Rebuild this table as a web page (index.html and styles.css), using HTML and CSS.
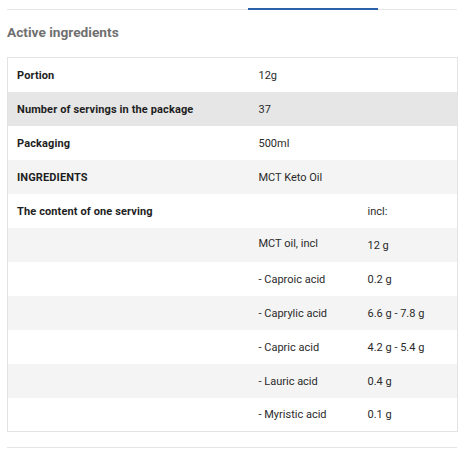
FILE: index.html
```html
<!DOCTYPE html>
<html>
<head>
<meta charset="utf-8">
<link rel="stylesheet" href="styles.css">
</head>
<body>
<div class="page">
  <div class="tabs">
    <div class="tab-spacer"></div>
    <div class="tab active"></div>
  </div>
  <h2 class="title">Active ingredients</h2>
  <table class="specs">
    <colgroup><col class="c1"><col class="c2"><col class="c3"></colgroup>
    <tr><th>Portion</th><td colspan="2">12g</td></tr>
    <tr class="hover"><th>Number of servings in the package</th><td colspan="2">37</td></tr>
    <tr><th>Packaging</th><td colspan="2">500ml</td></tr>
    <tr><th>INGREDIENTS</th><td colspan="2">MCT Keto Oil</td></tr>
    <tr><th>The content of one serving</th><td></td><td>incl:</td></tr>
    <tr><th></th><td class="raise">MCT oil, incl</td><td>12 g</td></tr>
    <tr><th></th><td>- Caproic acid</td><td>0.2 g</td></tr>
    <tr><th></th><td>- Caprylic acid</td><td>6.6 g - 7.8 g</td></tr>
    <tr><th></th><td>- Capric acid</td><td>4.2 g - 5.4 g</td></tr>
    <tr><th></th><td>- Lauric acid</td><td>0.4 g</td></tr>
    <tr><th></th><td>- Myristic acid</td><td>0.1 g</td></tr>
  </table>
  <div class="divider"></div>
</div>
</body>
</html>
```

FILE: styles.css
```css
* { box-sizing: border-box; }
html, body { margin: 0; padding: 0; background: #fff; }
body { font-family: Roboto, "Liberation Sans", sans-serif; color: #222; }
.page { padding: 0 7px; }
.tabs {
  display: flex;
  height: 10px;
  border-bottom: 1px solid #e6e6e6;
}
.tab-spacer { width: 241px; }
.tab.active {
  width: 130px;
  height: 10px;
  border-bottom: 2px solid #2d60aa;
  margin-bottom: -1px;
}
.title {
  margin: 14px 0 0;
  font-size: 13.7px;
  line-height: 16px;
  font-weight: 700;
  color: #707070;
  height: 16px;
}
.specs {
  margin-top: 17px;
  width: 450px;
  border-collapse: collapse;
  border: 1px solid #e3e3e3;
  table-layout: fixed;
  font-size: 11px;
}
.c1 { width: 242px; }
.c2 { width: 109px; }
.c3 { width: 99px; }
.specs tr { height: 34px; }
.specs tr:nth-child(even) { background: #f4f4f4; }
.specs tr.hover { background: #e6e6e6; }
.specs th, .specs td {
  padding: 2px 0 0 9px;
  text-align: left;
  vertical-align: middle;
  line-height: 14px;
}
.specs th { font-weight: 700; color: #1e1e1e; letter-spacing: 0.12px; }
.specs td { font-weight: 400; color: #2a2a2a; }
.specs td.raise { padding: 0 0 2px 9px; }
.divider {
  margin-top: 15px;
  height: 1px;
  background: #e6e6e6;
}
```
